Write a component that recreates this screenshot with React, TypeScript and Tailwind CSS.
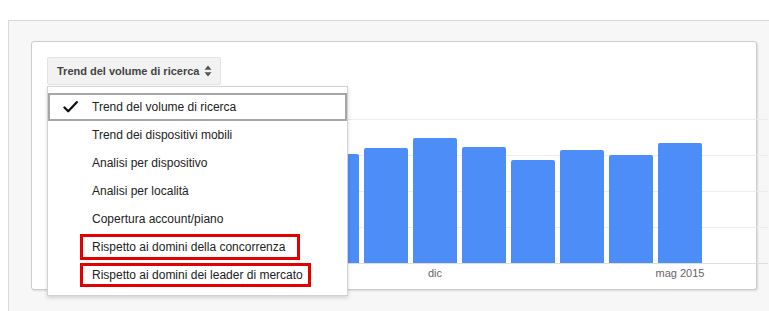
import React from "react";

const bars = [
  { h: 100, label: "" },
  { h: 106, label: "" },
  { h: 98, label: "" },
  { h: 111, label: "" },
  { h: 109, label: "" },
  { h: 115, label: "" },
  { h: 125, label: "dic" },
  { h: 116, label: "" },
  { h: 103, label: "" },
  { h: 113, label: "" },
  { h: 108, label: "" },
  { h: 120, label: "mag 2015" },
];

const items = [
  "Trend del volume di ricerca",
  "Trend dei dispositivi mobili",
  "Analisi per dispositivo",
  "Analisi per località",
  "Copertura account/piano",
  "Rispetto ai domini della concorrenza",
  "Rispetto ai domini dei leader di mercato",
];

function Check() {
  return (
    <svg width="15" height="12" viewBox="0 0 15 12" className="shrink-0">
      <path d="M1.5 6.5 L5.2 10.3 L13.8 1.2" fill="none" stroke="#111" strokeWidth="2.3" strokeLinecap="round" strokeLinejoin="round" />
    </svg>
  );
}

function UpDown() {
  return (
    <svg width="8" height="12" viewBox="0 0 8 12">
      <path d="M4 0.5 L7.5 4.8 H0.5 Z" fill="#555" />
      <path d="M4 11.5 L7.5 7.2 H0.5 Z" fill="#555" />
    </svg>
  );
}

export default function App() {
  return (
    <div className="w-[769px] h-[311px] bg-white overflow-hidden font-['Liberation_Sans',Arial,sans-serif]">
      <div className="h-[20px]" />
      <div className="flex h-[291px]">
        <div className="w-[8px] shrink-0" />
        <div className="flex-1 bg-[#f7f7f7] border-l border-t border-[#d9d9d9] pl-[22px] pt-[20px]">
          {/* Card */}
          <div className="relative w-[726px] h-[249px] bg-white border border-[#cccccc] rounded-[3px] shadow-[1px_1px_2px_rgba(0,0,0,0.12)]">
            <div className="pl-[15px] pt-[15px]">
              <button className="h-[28px] w-[174px] flex items-center justify-between pl-[9px] pr-[8px] bg-[#f2f2f2] border border-[#e3e3e3] rounded-[2px] text-[11px] font-bold text-[#444]">
                <span>Trend del volume di ricerca</span>
                <UpDown />
              </button>
            </div>

            {/* Chart */}
            <div className="mt-[34px] ml-[68px] w-[668px]">
              <div className="relative h-[145px]">
                <div className="absolute inset-0 flex flex-col justify-between">
                  <div className="h-px bg-[#ececec]" />
                  <div className="h-px bg-[#ececec]" />
                  <div className="h-px bg-[#ececec]" />
                  <div className="h-px bg-[#ececec]" />
                  <div className="h-px bg-[#dedede]" />
                </div>
                <div className="absolute left-0 right-0 top-0 bottom-[1px] flex items-end gap-[5px] pl-[19px]">
                  {bars.map((b, i) => (
                    <div
                      key={i}
                      className="w-[44px] bg-[#4c8df7] rounded-t-[2px]"
                      style={{ height: b.h }}
                    />
                  ))}
                </div>
              </div>
              <div className="flex gap-[5px] pl-[19px] mt-[3px]">
                {bars.map((b, i) => (
                  <div key={i} className="w-[44px] flex justify-center">
                    <span className="whitespace-nowrap text-[11px] leading-[13px] text-[#666]">{b.label}</span>
                  </div>
                ))}
              </div>
            </div>

            {/* Dropdown menu */}
            <div className="absolute left-[15px] top-[44px] w-[301px] h-[210px] bg-white border border-[#d2d2d2] shadow-[0_2px_4px_rgba(0,0,0,0.15)] py-[6px] text-[12px] text-[#222]">
              {items.map((t, i) => (
                <div
                  key={t}
                  className={
                    i === 0
                      ? "h-[28px] flex items-center border-2 border-[#a6a6a6] pl-[13px]"
                      : "h-[28px] flex items-center pl-[44px]"
                  }
                >
                  {i === 0 && (
                    <>
                      <Check />
                      <span className="ml-[14px]">{t}</span>
                    </>
                  )}
                  {i > 0 && i < 5 && <span>{t}</span>}
                  {i === 5 && (
                    <span className="-ml-[12px] border-[3px] border-[#e20000] pl-[9px] pr-[12px] py-[3px] leading-[14px]">{t}</span>
                  )}
                  {i === 6 && (
                    <span className="-ml-[12px] border-[3px] border-[#e20000] pl-[9px] pr-[5px] py-[2px] leading-[14px]">{t}</span>
                  )}
                </div>
              ))}
            </div>
          </div>
        </div>
      </div>
    </div>
  );
}
